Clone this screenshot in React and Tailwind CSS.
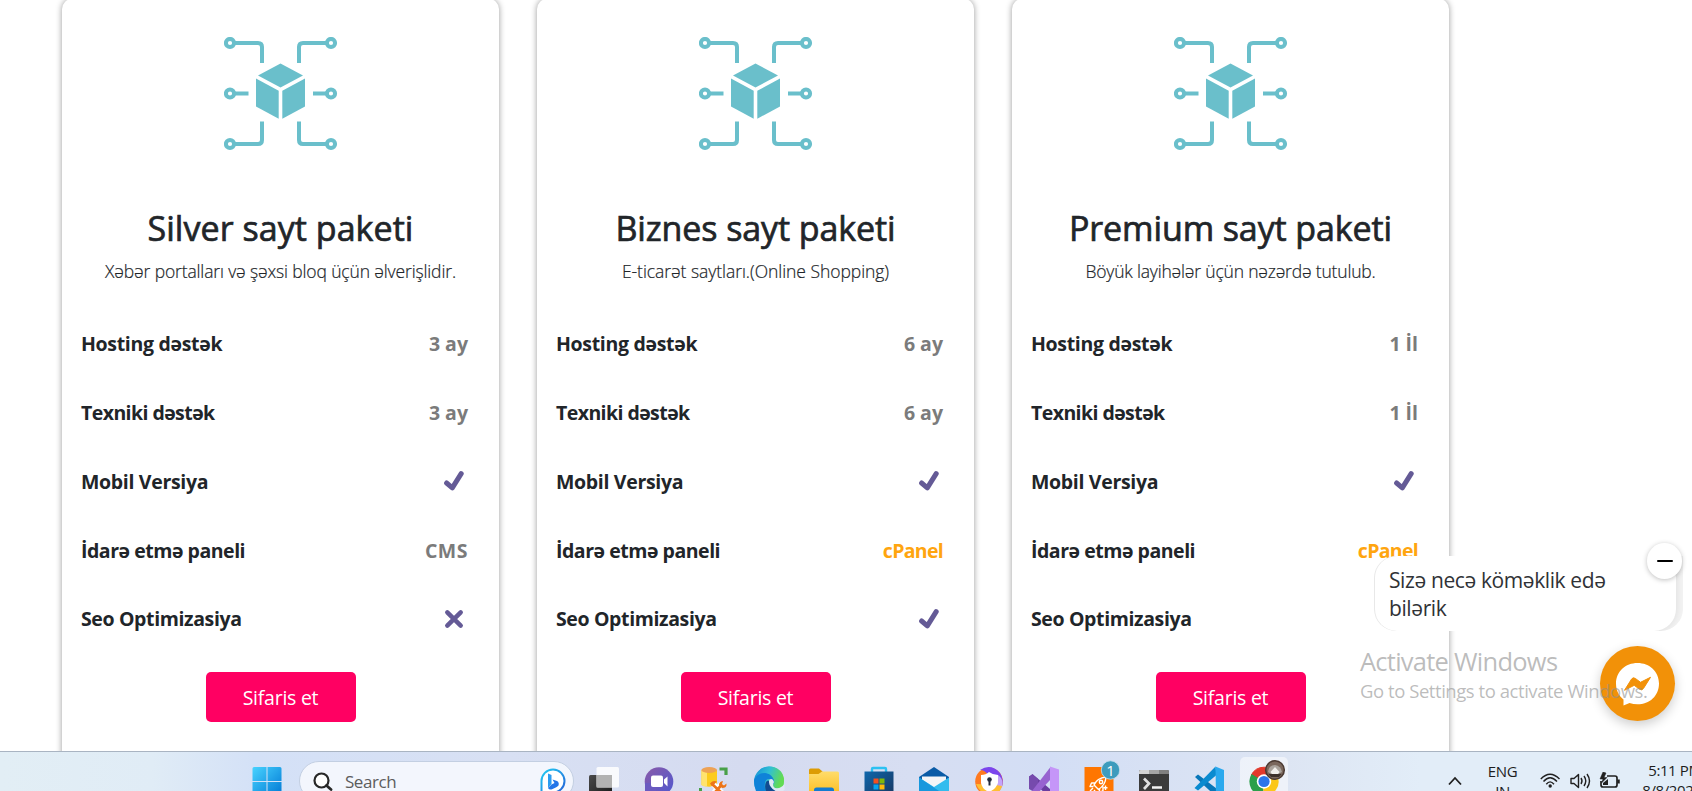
import React from "react";

const plans = [
  {
    name: "Silver sayt paketi",
    nameClass: "tracking-[0.05px]",
    note: "Xəbər portalları və şəxsi bloq üçün əlverişlidir.",
    noteClass: "tracking-[-0.14px]",
    values: ["3 ay", "3 ay", "check", "CMS", "cross"],
  },
  {
    name: "Biznes sayt paketi",
    nameClass: "tracking-[-0.1px]",
    note: "E-ticarət saytları.(Online Shopping)",
    noteClass: "tracking-[-0.05px]",
    values: ["6 ay", "6 ay", "check", "cPanel", "check"],
  },
  {
    name: "Premium sayt paketi",
    nameClass: "tracking-[-0.1px]",
    note: "Böyük layihələr üçün nəzərdə tutulub.",
    noteClass: "tracking-[-0.18px]",
    values: ["1 İl", "1 İl", "check", "cPanel", "check"],
  },
];

const features = [
  { label: "Hosting dəstək", cls: "tracking-[-0.32px]" },
  { label: "Texniki dəstək", cls: "tracking-[-0.57px]" },
  { label: "Mobil Versiya", cls: "tracking-[-0.32px]" },
  { label: "İdarə etmə paneli", cls: "tracking-[-0.47px]" },
  { label: "Seo Optimizasiya", cls: "tracking-[-0.37px]" },
];

function CubeIcon() {
  return (
    <svg width="114" height="114" viewBox="0 0 114 114" fill="none" stroke="#6abfcb" strokeWidth="4">
      <path d="M11 6H34Q38 6 38 10V26M103 6H79Q75 6 75 10V26M11 56.5H24.5M103 56.5H89M11 107H34Q38 107 38 103V84.500M103 107H79Q75 107 75 103V84.500" />
      {[6, 56.5, 107].map((y) => (
        <g key={y}>
          <circle cx="6" cy={y} r="4.100" fill="#fff" />
          <circle cx="107" cy={y} r="4.100" fill="#fff" />
        </g>
      ))}
      <g fill="#6abfcb" stroke="none">
        <path d="M56.500 26.500 79 38.500 56.500 50.500 34 38.500Z" />
        <path d="M32 41.500 54.700 53.800V81.700L32 69.500Z" />
        <path d="M81 41.500 58.300 53.800V81.700L81 69.500Z" />
      </g>
    </svg>
  );
}

function CheckMark() {
  return (
    <svg width="20" height="20" viewBox="0 0 20 20" className="mr-[4px]">
      <path d="M2.600 12 L8.300 16.800 L17.200 2.700" fill="none" stroke="#645a96" strokeWidth="5" strokeLinecap="round" strokeLinejoin="round" />
    </svg>
  );
}

function CrossMark() {
  return (
    <svg width="20" height="20" viewBox="0 0 20 20" className="mr-[4px]">
      <path d="M3.300 3.300 16.700 16.700M16.700 3.300 3.300 16.700" stroke="#645a96" strokeWidth="4.500" strokeLinecap="round" />
    </svg>
  );
}

function Value({ value }) {
  if (value === "check") return <CheckMark />;
  if (value === "cross") return <CrossMark />;
  if (value === "cPanel") return <span className="tracking-[-0.700px] text-[#ffa50f]">{value}</span>;
  if (value === "CMS") return <span className="tracking-[0.500px] text-[#7b7b7b]">{value}</span>;
  return <span className="text-[#7b7b7b]">{value}</span>;
}

function PlanCard({ plan }) {
  return (
    <section className="flex h-[800px] w-[437px] shrink-0 flex-col items-center rounded-[10px] bg-white text-[#212529] shadow-[0_0_6px_rgba(0,0,0,0.4)]">
      <div className="mt-[38px] h-[114px]">
        <CubeIcon />
      </div>
      <h2 className={"mt-[53px] h-[48px] whitespace-nowrap text-[34px] leading-[48px] [-webkit-text-stroke:0.7px_#212529] " + plan.nameClass}>{plan.name}</h2>
      <p className={"mt-[5px] h-[28px] whitespace-nowrap text-[17.500px] leading-[28px] font-light [-webkit-text-stroke:0.2px_#212529] " + plan.noteClass}>{plan.note}</p>
      <ul className="mt-[24.400px] w-full pr-[31px] pl-[19px] text-[19.500px] font-bold">
        {features.map((f, i) => (
          <li key={f.label} className="flex h-[68.800px] items-center justify-between whitespace-nowrap">
            <span className={f.cls}>{f.label}</span>
            <Value value={plan.values[i]} />
          </li>
        ))}
      </ul>
      <button className="mt-[18.600px] ml-[1px] h-[50px] w-[150px] shrink-0 rounded-[5px] bg-[#ff0062] pt-[2px] pr-[1px] text-[19.500px] tracking-[-0.25px] text-white">Sifaris et</button>
    </section>
  );
}

function ChatWidget() {
  return (
    <>
      <div className="absolute top-[556px] left-[1374px] h-[75px] w-[309px] overflow-hidden rounded-[22px] rounded-tr-none bg-[#f3f3f3]">
        <div className="ml-px h-full w-[301px] rounded-[22px] bg-white pt-[10px] pl-[14px] text-[21px] leading-[28px] whitespace-nowrap text-[#303236] shadow-[0_0_8px_rgba(0,0,0,0.1)]">
          <div className="tracking-[-0.4px]">Sizə necə köməklik edə</div>
          <div className="tracking-[-0.4px]">bilərik</div>
        </div>
      </div>
      <div className="absolute top-[543px] left-[1647px] flex h-[36px] w-[35px] items-center justify-center rounded-full bg-white shadow-[0_1px_5px_rgba(0,0,0,0.25)]">
        <div className="h-[2.500px] w-[16px] rounded-full bg-black" />
      </div>
      <div className="absolute top-[646px] left-[1600px] h-[75px] w-[75px] rounded-full bg-[#f29108] shadow-[0_4px_12px_rgba(0,0,0,0.2)]">
        <svg width="75" height="75" viewBox="0 0 75 75">
          <path d="M37.500 17C25.500 17 16 25.500 16 37.500C16 44.500 19 50 23.500 53.500V59.500L29.500 57Q33.500 58.300 37.500 58.300C49.500 58.300 59 50 59 37.500C59 25.500 49.500 17 37.500 17Z" fill="#fff" />
          <path d="M24.500 44.300 31.600 33Q33 31 35.300 32.400L40.500 36.300L50.500 31.300L43.500 42.400Q42 44.800 39.600 43.300L34.200 39.300Z" fill="#f29108" stroke="#f29108" strokeWidth="1" strokeLinejoin="round" />
        </svg>
      </div>
      <div className="absolute top-[643px] left-[1360px] whitespace-nowrap text-[#8f8f8f]/60">
        <div className="h-[36px] text-[25.500px] leading-[36px] tracking-[-0.75px]">Activate Windows</div>
        <div className="h-[24px] text-[18.500px] leading-[24px] tracking-[-0.45px]">Go to Settings to activate Windows.</div>
      </div>
    </>
  );
}

function Cell({ children, active }) {
  return (
    <div className="flex h-[52px] w-[55px] shrink-0 justify-center pt-[5px]">
      <div className={active ? "flex h-[46px] w-[48px] justify-center rounded-[5px] bg-white/50 pt-[8px]" : "flex justify-center pt-[8px]"}>
        <svg className="overflow-visible" width="30" height="32" viewBox="0 0 30 32">{children}</svg>
      </div>
    </div>
  );
}

function Taskbar() {
  return (
    <footer className="relative flex h-[40px] shrink-0 overflow-hidden border-t border-[#a9b4c2] bg-[linear-gradient(90deg,#e2eef5_0%,#e0ecf6_9%,#d4e1f7_15%,#d8e0f3_30%,#d5dbf0_44%,#d7def2_54%,#d3def5_62%,#dde5f3_76%,#e2edf8_84%,#e2edf8_100%)]">
      <div className="w-[239.500px] shrink-0" />
      <svg width="0" height="0" className="absolute">
        <defs>
          <linearGradient id="win" x1="0" y1="0" x2="1" y2="1"><stop stopColor="#48d3ff" /><stop offset="1" stopColor="#0078d4" /></linearGradient>
          <linearGradient id="chat" x1="0" y1="0" x2="1" y2="1"><stop stopColor="#8a5aa8" /><stop offset="1" stopColor="#4f58d0" /></linearGradient>
          <linearGradient id="edge" x1="0" y1="0" x2="1" y2="0.3"><stop stopColor="#1592d8" /><stop offset="0.5" stopColor="#31bfd4" /><stop offset="1" stopColor="#62db54" /></linearGradient>
          <linearGradient id="folder" x1="0" y1="0" x2="0" y2="1"><stop stopColor="#ffdc6b" /><stop offset="1" stopColor="#fbb917" /></linearGradient>
          <linearGradient id="store" x1="0" y1="0" x2="1" y2="1"><stop stopColor="#0f67ac" /><stop offset="1" stopColor="#18345c" /></linearGradient>
          <linearGradient id="bing" x1="0" y1="0" x2="1" y2="1"><stop stopColor="#22cdf2" /><stop offset="1" stopColor="#2461d8" /></linearGradient>
          <linearGradient id="dark" x1="0" y1="0" x2="1" y2="1"><stop stopColor="#4a4a4a" /><stop offset="1" stopColor="#161616" /></linearGradient>
        </defs>
      </svg>

      <Cell>
        <path d="M2 2H14.500V16H0.500V3.500Q0.500 2 2 2ZM15.500 2H28Q29.500 2 29.500 3.500V16H15.500ZM0.500 17H14.500V31H0.500ZM15.500 17H29.500V31H15.500Z" fill="url(#win)" />
      </Cell>

      <div className="mt-[9px] ml-[4.500px] flex h-[40px] w-[275px] shrink-0 rounded-full border border-[#c3cfe2] bg-[#f3f6fd]">
        <svg width="20" height="22" viewBox="0 0 20 22" className="mt-[10px] ml-[13px]" fill="none" stroke="#282828" strokeWidth="2.200" strokeLinecap="round">
          <circle cx="8.500" cy="8.500" r="7" fill="#fff" />
          <path d="M13.500 13.500 18 17.500" strokeWidth="2.800" />
        </svg>
        <span className="mt-[7px] ml-[12px] w-[195px] text-[17px] leading-[26px] tracking-[-0.45px] text-[#5c5c5c]">Search</span>
        <svg width="26" height="28" viewBox="0 0 26 28" className="mt-[6px]">
          <path d="M13 1.500A11.500 11.500 0 1 1 13 24.500H1.500V13A11.500 11.500 0 0 1 13 1.500Z" fill="#fff" stroke="url(#bing)" strokeWidth="2" />
          <path d="M8 5.500 11.500 7V16L8 20Z" fill="#2b9cf0" />
          <path d="M8 20 11.500 16.500 14.500 15 12.500 11.500 17 13Q19.500 14.500 18.500 17.500Q17.500 19 11.500 21.500Q9 22 8 20Z" fill="#2475e8" />
        </svg>
      </div>

      <div className="ml-[2px] flex">
        <Cell>
          <rect x="0" y="10" width="23" height="23" rx="1.500" fill="url(#dark)" />
          <rect x="7.500" y="2" width="22.500" height="20.500" rx="1.500" fill="#fff" opacity="0.85" />
          <path d="M7.500 10H23V22.500H7.500Z" fill="#b2b2b2" />
        </Cell>
        <Cell>
          <circle cx="15" cy="16.500" r="14.300" fill="url(#chat)" />
          <path d="M1 18H12V34H1Z" fill="#6a5ac0" />
          <rect x="7" y="10.500" width="12" height="11.500" rx="2" fill="#fff" />
          <path d="M20 14.500 23.500 11.500V21.500L20 18Z" fill="#fff" />
        </Cell>
        <Cell>
          <path d="M2.500 5V20Q10 23.500 18 20V5Z" fill="#fccb1c" />
          <path d="M2.500 5V20Q5 22 8 21.500V5Z" fill="#ffe36e" />
          <ellipse cx="10.200" cy="5" rx="7.800" ry="3" fill="#eda255" />
          <path d="M20.500 4H27V10" fill="none" stroke="#48a048" strokeWidth="3.200" />
          <path d="M0 23H3V32H0Z" fill="#48a048" />
          <path d="M13 30 23 18.500M14 19 25 30" stroke="#fff" strokeWidth="5.500" />
          <path d="M14.500 29 22.500 20M13 19 25 30" stroke="#ec7417" strokeWidth="2.700" />
          <path d="M11 18.500Q14 15 18 16.500L13 21.500ZM20 20Q20 16.500 24 16L23 19 25 20.500 27.500 18.500Q28 23 23 23Z" fill="#ec7417" />
        </Cell>
        <Cell>
          <circle cx="15" cy="16.500" r="15" fill="url(#edge)" />
          <path d="M0 15Q3 8 11 8Q19 8 21 16Q22 20 18 19Q18 14 14 14Q10 15 11 23L14 33H7Q0 27 0 15Z" fill="#0f82d8" />
          <path d="M12 17Q9 24 16 33H23L28 25Q22 27 18 23Q15 20 16 17Q14 14 12 17Z" fill="#114b91" />
          <path d="M17 22Q14 18 15.500 14.500Q19 13 20 17Q18 21 21 23Q27 24 30.500 19V25L27 27Q20 27 17 22Z" fill="#dfe8f5" />
          <path d="M15 1.500Q28 2 30 14Q30 21 23 22Q18 22 20 18.500Q21 13 15 9Q8 5 2 11Q6 1.500 15 1.500Z" fill="url(#edge)" />
        </Cell>
        <Cell>
          <path d="M0 5Q0 3.500 1.500 3.500H10L13.500 6.500V12H0Z" fill="#dd9c04" />
          <path d="M0 9H9.500L13 6.500H28.500Q30 6.500 30 8V33H0Z" fill="url(#folder)" />
          <path d="M5 33V25Q5 22.500 7.500 22.500H22.500Q25 22.500 25 25V33Z" fill="#137bd0" />
          <path d="M9 26H21V33H9Z" fill="#0b60b0" />
        </Cell>
        <Cell>
          <path d="M8 7V4Q8 3 9 3H21Q22 3 22 4V7" fill="none" stroke="#2cc1f2" strokeWidth="2.400" />
          <path d="M0.500 6.500H29.500V34H0.500Z" fill="url(#store)" />
          <path d="M9.500 13.500H14.500V18.500H9.500Z" fill="#f2501f" />
          <path d="M15.500 13.500H20.500V18.500H15.500Z" fill="#80b808" />
          <path d="M9.500 19.500H14.500V24.500H9.500Z" fill="#05a4ee" />
          <path d="M15.500 19.500H20.500V24.500H15.500Z" fill="#ffba08" />
        </Cell>
        <Cell>
          <path d="M0 12 15 2 30 12V20H0Z" fill="#0a5ba6" />
          <path d="M3 11.500H27V26H3Z" fill="#f4f5f7" />
          <path d="M0 12.500 15 22 30 12.500V33H0Z" fill="#33bcee" />
          <path d="M0 12.500 26 30V34H0Z" fill="#1798dd" />
        </Cell>
        <Cell>
          <circle cx="15" cy="16.500" r="13.800" fill="#ff7a20" />
          <path d="M6 5Q17-2 26 8Q30 14 28 22Q25 10 14 10Q11 5 6 5Z" fill="#7b45ed" />
          <path d="M24 10Q31 15 27 24Q23 30 17 31Q24 23 24 10Z" fill="#c4a4fa" />
          <path d="M2 19Q7 31 20 30Q26 28 28 21L22 20Z" fill="#ffbf32" />
          <path d="M15 7Q19 10 24 10V18Q22 24 15 27Q8 24 7 18V10Q12 10 15 7Z" fill="#fff" />
          <circle cx="15.500" cy="14.500" r="2.300" fill="#222a3d" />
          <path d="M14.500 15H16.500V20.500H14.500Z" fill="#222a3d" />
        </Cell>
        <Cell>
          <path d="M0 11.500 3.500 9 21 24V33L0 13Z" fill="#693da0" />
          <path d="M0 12 3.500 9.500 9 14V21L3.500 26 0 24Z" fill="#764aad" />
          <path d="M3 26 21.500 2 22 14 8 29Z" fill="#9763d0" />
          <path d="M21 1.500 30 4.500V33H21Z" fill="#c596f8" />
        </Cell>
        <Cell>
          <path d="M0.500 2H29.500V34H0.500Z" fill="#ff7600" />
          <g fill="none" stroke="#fff" strokeWidth="1.400" strokeLinejoin="round">
            <path d="M10 20Q13 13 22 12Q21.500 20 14.500 24.500ZM11 18H7.500L6 21.500 9.500 21.500M15.500 24V28L19 25.500V21.500" />
            <circle cx="17" cy="17" r="1.700" />
            <path d="M7 30 11 25M6 26 9 23M21.500 20.500V25M19.500 22.800H23.500" />
          </g>
          <circle cx="26.500" cy="5" r="9.200" fill="#3d9cbd" stroke="#c8dfec" strokeWidth="0.800" />
          <text x="26.500" y="10.500" textAnchor="middle" fontSize="15" fill="#fff" fontFamily="Open Sans, sans-serif">1</text>
        </Cell>
        <Cell>
          <path d="M0 33V6.500Q0 5 1.500 5H28.500Q30 5 30 6.500V33Z" fill="#3b3b3b" />
          <path d="M0 9V6.500Q0 5 1.500 5H10V9Z" fill="#d5d5d5" />
          <path d="M10 5H20V9H10Z" fill="#a5a5a5" />
          <path d="M20 5H28.500Q30 5 30 6.500V9H20Z" fill="#808080" />
          <path d="M5 13.500 10 18.500 5 24" fill="none" stroke="#e0e0e0" strokeWidth="2.700" />
          <path d="M13 22.500H23" stroke="#f4f4f4" strokeWidth="2.500" />
        </Cell>
        <Cell>
          <path d="M1 12 4 9.500 22.500 23.500V32Z" fill="#0877b9" />
          <path d="M0.500 23 21.500 1.500 22.500 10 4 25.500Z" fill="#0a8bd0" />
          <path d="M21.500 1.500 30 5V33H22Z" fill="#2aa9ee" />
        </Cell>
        <Cell active>
          <path d="M15 16.500 2.300 10A14.500 14.500 0 0 1 28 10Z" fill="#e2392c" stroke="#e2392c" />
          <path d="M15 16.500 2.500 9A14.500 14.500 0 0 0 14 31Z" fill="#2b9f4b" />
          <path d="M15 16.500 28 10A14.500 14.500 0 0 1 14 31Z" fill="#fbc719" />
          <circle cx="15" cy="16.500" r="7.200" fill="#fff" />
          <circle cx="15" cy="16.500" r="5.600" fill="#2b75ea" />
          <circle cx="26" cy="5" r="9.300" fill="#7a675c" stroke="#4a3931" strokeWidth="1.500" />
          <path d="M19 7Q20 0 26 0Q32 1 33 7L29 9H22Z" fill="#aaa39c" />
          <path d="M21.500 7 26 2 30.500 7 29 9H23Z" fill="#f2efeb" />
          <path d="M19.500 9 32.500 9 30 12H22Z" fill="#3d302a" />
        </Cell>
      </div>

      <div className="ml-[156.500px] flex shrink-0 text-[16px] text-[#1d1d1d]">
        <svg width="14" height="10" viewBox="0 0 14 10" className="mt-[24px] shrink-0"><path d="M1 8.500 7 2 13 8.500" fill="none" stroke="#202020" strokeWidth="1.800" /></svg>
        <div className="mt-[9px] ml-[20px] w-[42px] shrink-0 text-center text-[15px] leading-[20px] tracking-[-0.4px]">ENG<br />IN</div>
        <svg width="82" height="20" viewBox="0 0 82 20" className="mt-[20px] ml-[16px] shrink-0" fill="none" stroke="#202020" strokeWidth="1.400">
          <path d="M0.800 7Q10-2.500 19.500 7M3.500 9.500Q10 2 17 9.500M6.300 12.300Q10 7.500 14 12.300" />
          <circle cx="10.200" cy="14" r="1.700" fill="#202020" stroke="none" />
          <path d="M31 6.500H34L38.500 2.500V15.500L34 11.500H31Z M41 6Q43 9 41 12M44 4Q47.500 9 44 14M47 2Q52 9 47 16" strokeLinejoin="round" />
          <path d="M67 4H75Q77 4 77 6V13Q77 15 75 15H63Q61 15 61 13V9" strokeWidth="1.700" />
          <path d="M78.500 7.500V11.500" strokeWidth="2.500" />
          <path d="M63 0 60 7H63L61.500 11 67 5.500H64L66 1Z" fill="#202020" strokeWidth="0.500" />
          <path d="M63 13V11L68 7V13Z" fill="#202020" stroke="none" />
        </svg>
        <div className="mt-[8px] ml-[12px] w-[68px] shrink-0 text-right text-[15px] leading-[20px] tracking-[-0.4px]">
          <div className="whitespace-nowrap">5:11 PM</div>
          <div className="whitespace-nowrap">8/8/2023</div>
        </div>
      </div>
    </footer>
  );
}

export default function App() {
  return (
    <div className="relative flex h-[791px] w-[1692px] flex-col overflow-hidden bg-white font-['Open_Sans','Noto_Sans',sans-serif]">
      <main className="flex h-[751px] shrink-0 overflow-hidden pt-px pl-[62px]">
        <div className="-mt-[2px] flex gap-[38px]">
          {plans.map((p) => (
            <PlanCard key={p.name} plan={p} />
          ))}
        </div>
      </main>
      <Taskbar />
      <ChatWidget />
    </div>
  );
}
